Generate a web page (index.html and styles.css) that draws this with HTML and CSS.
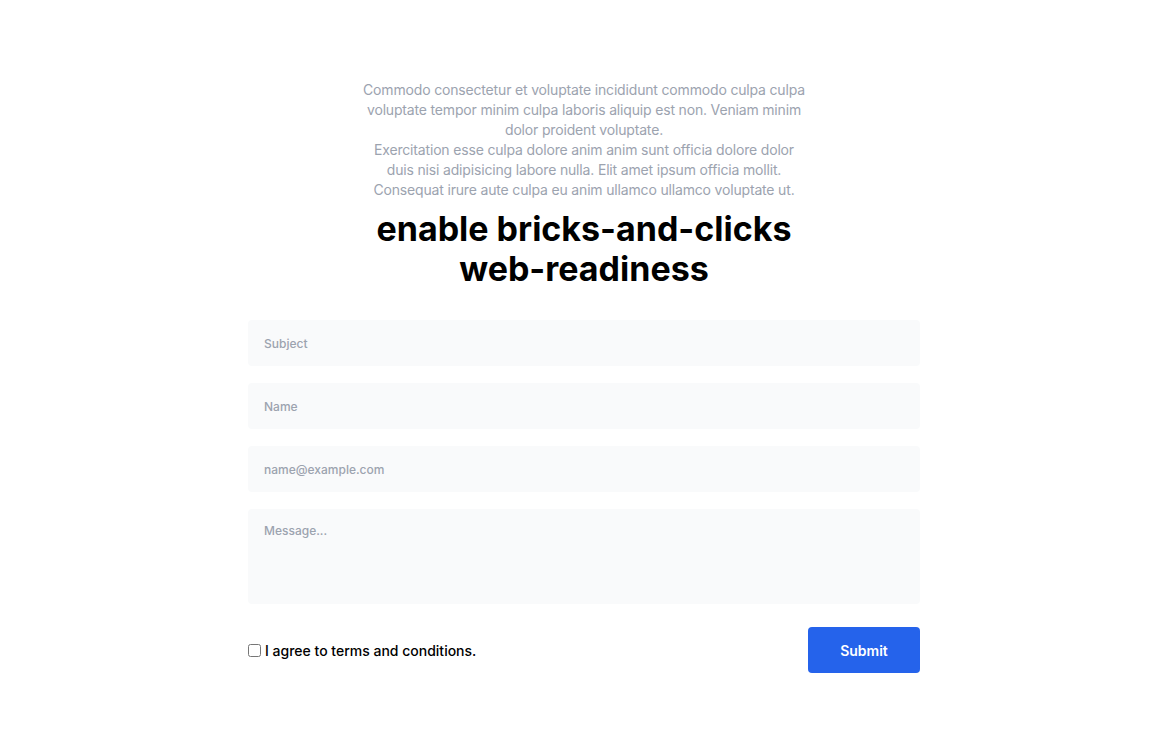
FILE: index.html
```html
<!DOCTYPE html>
<html lang="en">
<head>
<meta charset="utf-8">
<title>Contact</title>
<link rel="stylesheet" href="styles.css">
</head>
<body>
<main class="page">
  <section class="intro">
    <p class="lead">Commodo consectetur et voluptate incididunt commodo culpa culpa voluptate tempor minim culpa laboris aliquip est non. Veniam minim dolor proident voluptate.<br>Exercitation esse culpa dolore anim anim sunt officia dolore dolor duis nisi adipisicing labore nulla. Elit amet ipsum officia mollit. Consequat irure aute culpa eu anim ullamco ullamco voluptate ut.</p>
    <h1 class="title">enable bricks-and-clicks web-readiness</h1>
  </section>
  <form class="form">
    <input class="field" type="text" placeholder="Subject">
    <input class="field" type="text" placeholder="Name">
    <input class="field" type="email" placeholder="name@example.com">
    <textarea class="field area" placeholder="Message..."></textarea>
    <div class="actions">
      <label class="agree"><input type="checkbox" class="check"> I agree to terms and conditions.</label>
      <button type="button" class="submit">Submit</button>
    </div>
  </form>
</main>
</body>
</html>
```

FILE: styles.css
```css
* { box-sizing: border-box; }
html, body { margin: 0; background: #fff; }
body { font-family: Inter, "Noto Sans", sans-serif; color: #000; }
.page {
  padding-top: 80px;
  display: flex;
  flex-direction: column;
  align-items: center;
}
.intro {
  display: flex;
  flex-direction: column;
  align-items: center;
  text-align: center;
}
.lead {
  margin: 0;
  max-width: 448px;
  font-size: 14px;
  line-height: 20px;
  letter-spacing: -0.17px;
  color: #9ca3af;
}
.title {
  margin: 9px 0 0;
  max-width: 448px;
  font-size: 34px;
  line-height: 40px;
  font-weight: 700;
}
.form {
  width: 672px;
  margin-top: 31px;
  display: flex;
  flex-direction: column;
  gap: 17px;
}
.field {
  display: block;
  width: 100%;
  height: 46px;
  padding: 12px 16px;
  border: none;
  border-radius: 4px;
  background: #f9fafb;
  font-family: inherit;
  font-size: 12px;
  font-weight: 500;
  color: #111827;
  outline: none;
}
.field::placeholder { color: #9ca3af; }
.area {
  height: 95px;
  resize: none;
  padding-top: 14px;
}
.actions {
  margin-top: 6px;
  display: flex;
  align-items: center;
  justify-content: space-between;
}
.agree {
  display: flex;
  align-items: center;
  gap: 4px;
  font-size: 14px;
  font-weight: 500;
}
.check {
  margin: 0;
  width: 13px;
  height: 13px;
}
.submit {
  width: 112px;
  height: 46px;
  border: none;
  border-radius: 4px;
  background: #2563eb;
  color: #fff;
  font-family: inherit;
  font-size: 14px;
  font-weight: 600;
}
```
